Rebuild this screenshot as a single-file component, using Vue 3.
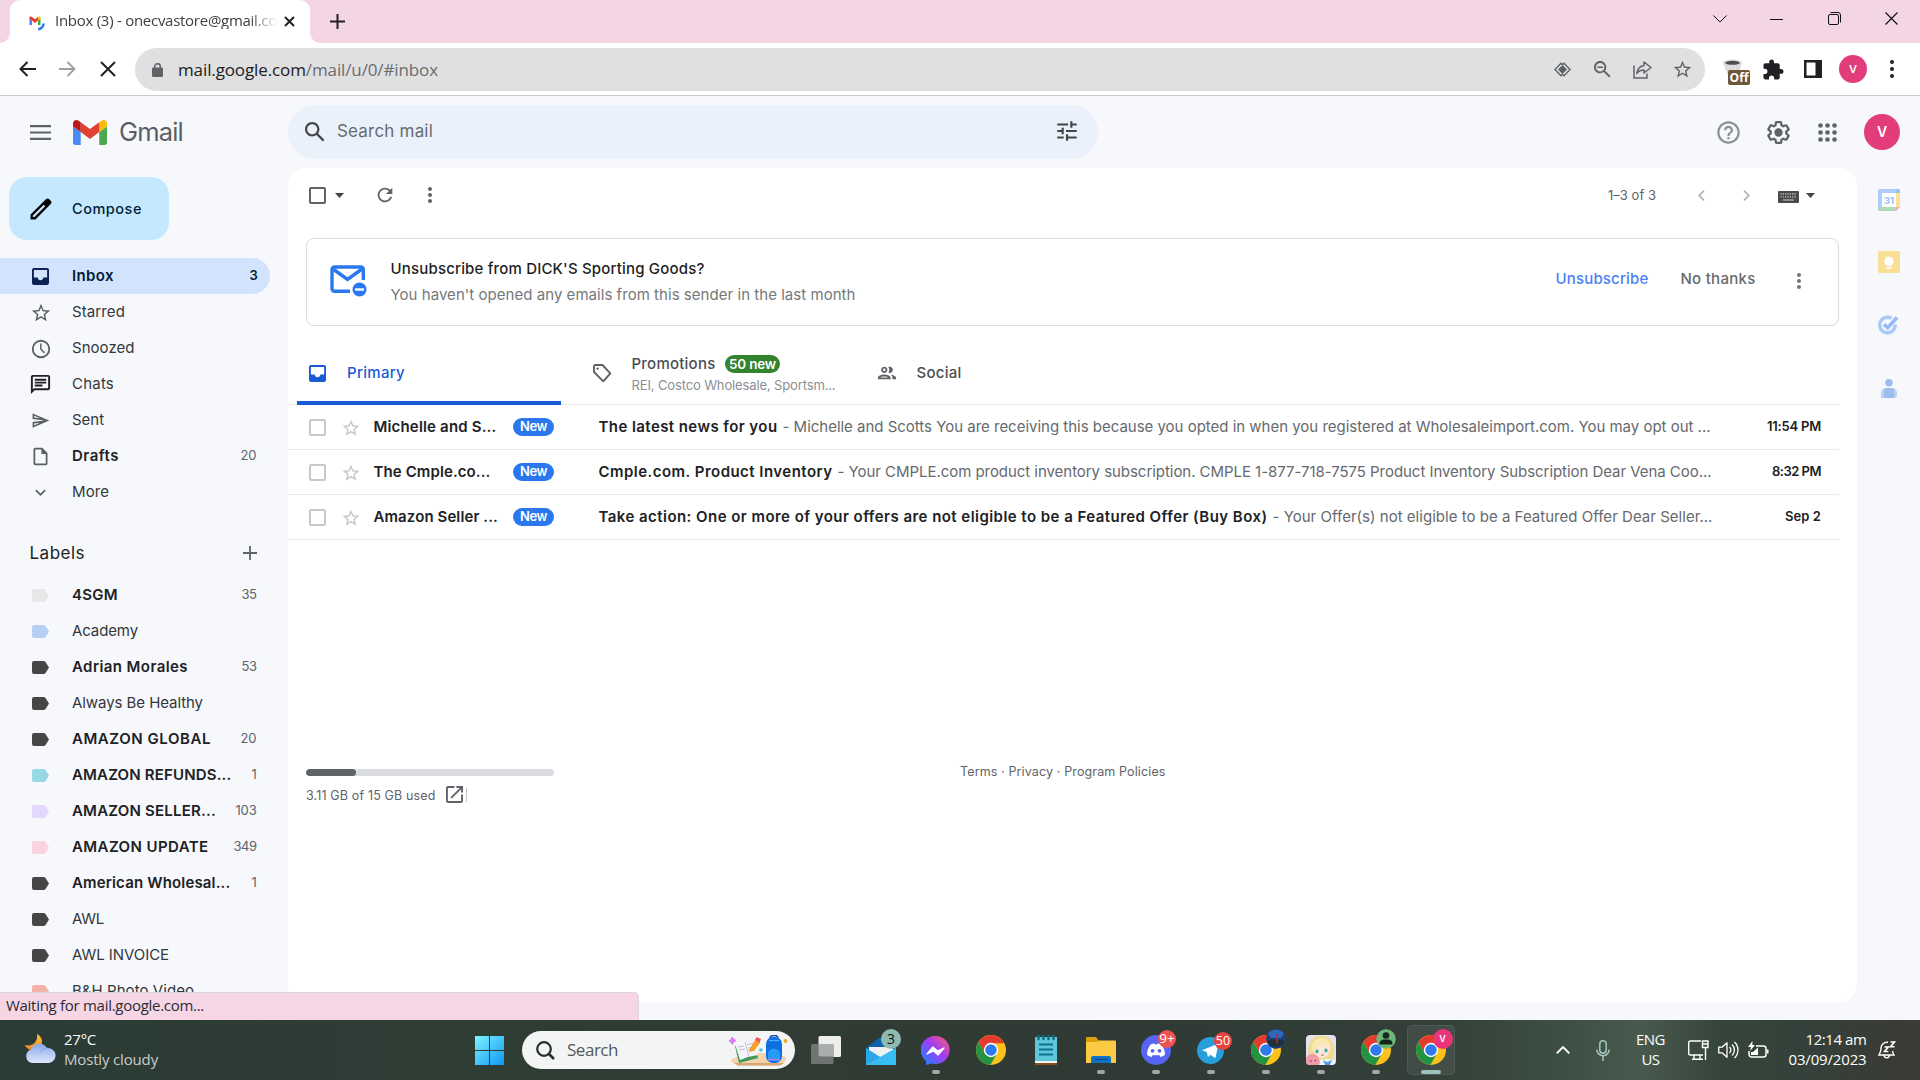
<script setup>
import { h } from 'vue'

/* Spreads the letters of an element so that its text takes up a given width. */
const vFit = {
  mounted(el, { value }) {
    if (!value) return
    const n = el.textContent.length
    let spacing = 0
    for (let i = 0; i < 3; i++) {
      spacing += (value - el.getBoundingClientRect().width) / n
      el.style.letterSpacing = spacing.toFixed(3) + 'px'
    }
  },
}

const paths = {
  inbox: 'M19 3H5c-1.1 0-2 .9-2 2v14c0 1.1.9 2 2 2h14c1.1 0 2-.9 2-2V5c0-1.1-.9-2-2-2zm0 10h-4c0 1.66-1.35 3-3 3s-3-1.34-3-3H5V5h14v8z',
  star: 'M22 9.24l-7.19-.62L12 2 9.19 8.63 2 9.24l5.46 4.73L5.82 21 12 17.27 18.18 21l-1.63-7.03L22 9.24zM12 15.4l-3.76 2.27 1-4.28-3.32-2.88 4.38-.38L12 6.1l1.71 4.04 4.38.38-3.32 2.88 1 4.28L12 15.4z',
  clock: 'M12 2a10 10 0 1 0 0 20 10 10 0 0 0 0-20zm0 18a8 8 0 1 1 0-16 8 8 0 0 1 0 16zM12.6 6H11v6.4l4.2 4.4 1.2-1.2-3.8-3.9z',
  chat: 'M4 4h16v12H5.17L4 17.17V4m0-2c-1.1 0-1.99.9-1.99 2L2 22l4-4h14c1.1 0 2-.9 2-2V4c0-1.1-.9-2-2-2H4zm2 10h8v2H6v-2zm0-3h12v2H6V9zm0-3h12v2H6V6z',
  send: 'M4 6.03l7.51 3.22-7.52-1 .01-2.22m7.5 8.72L4 17.97v-2.22l7.51-1M2.01 3L2 10l15 2-15 2 .01 7L23 12 2.01 3z',
  file: 'M14 2H6c-1.1 0-2 .9-2 2v16c0 1.1.89 2 2 2h12c1.1 0 2-.9 2-2V8l-6-6zM6 20V4h7v5h5v11H6z',
  more: 'M16.59 8.59L12 13.17 7.41 8.59 6 10l6 6 6-6z',
  search: 'M20.49,19l-5.73-5.73C15.53,12.2,16,10.91,16,9.5C16,5.91,13.09,3,9.5,3S3,5.91,3,9.5C3,13.09,5.91,16,9.5,16c1.41,0,2.7-0.47,3.77-1.24L19,20.49L20.49,19zM5,9.5C5,7.01,7.01,5,9.5,5S14,7.01,14,9.5S11.99,14,9.5,14S5,11.99,5,9.5z',
  zoomOut: 'M20.49,19l-5.73-5.73C15.53,12.2,16,10.91,16,9.5C16,5.91,13.09,3,9.5,3S3,5.91,3,9.5C3,13.09,5.91,16,9.5,16c1.41,0,2.7-0.47,3.77-1.24L19,20.49L20.49,19zM5,9.5C5,7.01,7.01,5,9.5,5S14,7.01,14,9.5S11.99,14,9.5,14S5,11.99,5,9.5zM6.5 8.7h6v1.6h-6z',
  tune: 'M3 17v2h6v-2H3zM3 5v2h10V5H3zm10 16v-2h8v-2h-8v-2h-2v6h2zM7 9v2H3v2h4v2h2V9H7zm14 4v-2H11v2h10zm-6-4h2V7h4V5h-4V3h-2v6z',
  help: 'M11 18h2v-2h-2v2zm1-16C6.48 2 2 6.48 2 12s4.48 10 10 10 10-4.48 10-10S17.52 2 12 2zm0 18c-4.41 0-8-3.59-8-8s3.59-8 8-8 8 3.59 8 8-3.59 8-8 8zm0-14c-2.21 0-4 1.79-4 4h2c0-1.1.9-2 2-2s2 .9 2 2c0 2-3 1.75-3 5h2c0-2.25 3-2.5 3-5 0-2.21-1.79-4-4-4z',
  gear: 'M13.85 22.25h-3.7c-.74 0-1.36-.54-1.45-1.27l-.27-1.89c-.27-.14-.53-.29-.79-.46l-1.8.72c-.7.26-1.47-.03-1.81-.65L2.2 15.53c-.35-.66-.2-1.44.36-1.88l1.53-1.19c-.01-.15-.02-.3-.02-.46 0-.15.01-.31.02-.46l-1.52-1.19c-.59-.45-.74-1.26-.37-1.88l1.85-3.19c.34-.62 1.11-.9 1.79-.63l1.81.73c.26-.17.52-.32.78-.46l.27-1.91c.09-.7.71-1.25 1.44-1.25h3.7c.74 0 1.36.54 1.45 1.27l.27 1.89c.27.14.53.29.79.46l1.8-.72c.71-.26 1.48.03 1.82.65l1.84 3.18c.36.66.2 1.44-.36 1.88l-1.52 1.19c.01.15.02.3.02.46s-.01.31-.02.46l1.52 1.19c.56.45.72 1.23.37 1.86l-1.86 3.22c-.34.62-1.11.9-1.8.63l-1.8-.72c-.26.17-.52.32-.78.46l-.27 1.91c-.1.68-.72 1.22-1.46 1.22zm-3.23-2h2.76l.37-2.55.53-.22c.44-.18.88-.44 1.34-.78l.45-.34 2.38.96 1.38-2.4-2.03-1.58.07-.56c.03-.26.06-.51.06-.78s-.03-.53-.06-.78l-.07-.56 2.03-1.58-1.39-2.4-2.39.96-.45-.35c-.42-.32-.87-.58-1.33-.77l-.52-.22-.37-2.55h-2.76l-.37 2.55-.53.21c-.44.19-.88.44-1.34.79l-.45.33-2.38-.95-1.39 2.39 2.03 1.58-.07.56a7 7 0 0 0-.06.79c0 .26.02.53.06.78l.07.56-2.03 1.58 1.38 2.4 2.39-.96.45.35c.43.33.86.58 1.33.77l.53.22.38 2.55zM12 8.3a3.7 3.7 0 1 1 0 7.4 3.7 3.7 0 0 1 0-7.4z',
  refresh: 'M17.65 6.35C16.2 4.9 14.21 4 12 4c-4.42 0-7.99 3.58-7.99 8s3.57 8 7.99 8c3.73 0 6.84-2.55 7.73-6h-2.08c-.82 2.33-3.04 4-5.65 4-3.31 0-6-2.69-6-6s2.69-6 6-6c1.66 0 3.14.69 4.22 1.78L13 11h7V4l-2.35 2.35z',
  people: 'M9 13.75c-2.34 0-7 1.17-7 3.5V19h14v-1.75c0-2.33-4.66-3.5-7-3.5zM4.34 17c.84-.58 2.87-1.25 4.66-1.25s3.82.67 4.66 1.25H4.34zM9 12c1.93 0 3.5-1.57 3.5-3.5S10.93 5 9 5 5.5 6.57 5.5 8.5 7.07 12 9 12zm0-5c.83 0 1.5.67 1.5 1.5S9.83 10 9 10s-1.5-.67-1.5-1.5S8.17 7 9 7zm7.04 6.81c1.16.84 1.96 1.96 1.96 3.44V19h4v-1.75c0-2.02-3.5-3.17-5.96-3.44zM15 12c1.93 0 3.5-1.57 3.5-3.5S16.93 5 15 5c-.54 0-1.04.13-1.5.35.63.89 1 1.98 1 3.15s-.37 2.26-1 3.15c.46.22.96.35 1.5.35z',
  puzzle: 'M20.5 11H19V7c0-1.1-.9-2-2-2h-4V3.5C13 2.12 11.88 1 10.5 1S8 2.12 8 3.5V5H4c-1.1 0-1.99.9-1.99 2v3.8H3.5c1.49 0 2.7 1.21 2.7 2.7s-1.21 2.7-2.7 2.7H2V20c0 1.1.9 2 2 2h3.8v-1.5c0-1.49 1.21-2.7 2.7-2.7 1.49 0 2.7 1.21 2.7 2.7V22H17c1.1 0 2-.9 2-2v-4h1.5c1.38 0 2.5-1.12 2.5-2.5S21.88 11 20.5 11z',
  open: 'M19 19H5V5h7V3H5c-1.11 0-2 .9-2 2v14c0 1.1.89 2 2 2h14c1.1 0 2-.9 2-2v-7h-2v7zM14 3v2h3.59l-9.83 9.83 1.41 1.41L19 6.41V10h2V3h-7z',
  pencil: 'M20.41 4.94l-1.35-1.35c-.78-.78-2.05-.78-2.83 0L3 16.82V21h4.18L20.41 7.77c.79-.78.79-2.05 0-2.83zM6.4 19H5v-1.4l9.3-9.3 1.4 1.4z',
  dots: 'M12 8c1.1 0 2-.9 2-2s-.9-2-2-2-2 .9-2 2 .9 2 2 2zm0 2c-1.1 0-2 .9-2 2s.9 2 2 2 2-.9 2-2-.9-2-2-2zm0 6c-1.1 0-2 .9-2 2s.9 2 2 2 2-.9 2-2-.9-2-2-2z',
  label: 'M0 2a2 2 0 0 1 2-2h9.500a2.500 2.500 0 0 1 2 1L17 6.500l-3.500 5.500a2.500 2.500 0 0 1-2 1H2a2 2 0 0 1-2-2z',
}

/* One-path icon: n = name, s = width and height, vb = view box. */
const Icon = (p) =>
  h('svg', { width: p.s, height: p.s, viewBox: p.vb || '0 0 24 24' }, [h('path', { d: paths[p.n], fill: 'currentColor' })])
Icon.props = ['n', 's', 'vb']

const Chrome = () =>
  h('svg', { width: 30, height: 30, viewBox: '0 0 48 48' }, [
    h('circle', { cx: 24, cy: 24, r: 24, fill: '#fcc21b' }),
    h('path', { fill: '#e33b2e', d: 'M24 24L14.470 29.500 3.820 11.050A24 24 0 0 1 45.300 13H24z' }),
    h('path', { fill: '#229342', d: 'M24 24l9.530 5.500L22.880 47.950A24 24 0 0 1 3.820 11.050L14.470 29.500z' }),
    h('circle', { cx: 24, cy: 24, r: 11.5, fill: '#fff' }),
    h('circle', { cx: 24, cy: 24, r: 9.2, fill: '#2f7bee' }),
  ])

const nav = [
  { icon: 'inbox', s: 17, vb: '3 3 18 18', t: 'Inbox', w: 42, c: '3', cw: 7, on: true, b: true },
  { icon: 'star', s: 22, t: 'Starred', w: 53 },
  { icon: 'clock', s: 22, t: 'Snoozed', w: 62.5 },
  { icon: 'chat', s: 23, t: 'Chats', w: 42, dark: true },
  { icon: 'send', s: 19, t: 'Sent', w: 32 },
  { icon: 'file', s: 21, t: 'Drafts', w: 47, c: '20', cw: 16, b: true },
  { icon: 'more', s: 21, t: 'More', w: 37 },
]

const labels = [
  { color: '#e7e7e7', t: '4SGM', w: 46, c: '35', cw: 15, b: true },
  { color: '#b6cff5', t: 'Academy', w: 66 },
  { color: '#464646', t: 'Adrian Morales', w: 116, c: '53', cw: 15, b: true },
  { color: '#464646', t: 'Always Be Healthy', w: 131 },
  { color: '#464646', t: 'AMAZON GLOBAL', w: 139, c: '20', cw: 16, b: true },
  { color: '#98d7e4', t: 'AMAZON REFUNDS...', w: 159.5, c: '1', cw: 5, b: true },
  { color: '#e3d7ff', t: 'AMAZON SELLER...', w: 144, c: '103', cw: 21, b: true },
  { color: '#fbd3e0', t: 'AMAZON UPDATE', w: 136.5, c: '349', cw: 23, b: true },
  { color: '#464646', t: 'American Wholesal...', w: 158.5, c: '1', cw: 5, b: true },
  { color: '#464646', t: 'AWL', w: 32 },
  { color: '#464646', t: 'AWL INVOICE', w: 97 },
  { color: '#f2b2a8', t: 'B&H Photo Video', w: 122 },
]

const mails = [
  {
    from: 'Michelle and S...', fw: 123, subject: 'The latest news for you', sw: 179,
    text: '- Michelle and Scotts You are receiving this because you opted in when you registered at Wholesaleimport.com. You may opt out ...', tw: 928,
    time: '11:54 PM', dw: 54,
  },
  {
    from: 'The Cmple.co...', fw: 117, subject: 'Cmple.com. Product Inventory', sw: 234,
    text: '- Your CMPLE.com product inventory subscription. CMPLE 1-877-718-7575 Product Inventory Subscription Dear Vena Coo...', tw: 874,
    time: '8:32 PM', dw: 49,
  },
  {
    from: 'Amazon Seller ...', fw: 124.5, subject: 'Take action: One or more of your offers are not eligible to be a Featured Offer (Buy Box)', sw: 669,
    text: '- Your Offer(s) not eligible to be a Featured Offer Dear Seller...', tw: 440,
    time: 'Sep 2', dw: 36,
  },
]
</script>

<template>
  <div class="screen">
    <!-- Browser tab strip -->
    <div class="strip">
      <div class="tab">
        <svg class="fav" width="16" height="15" viewBox="0 0 16 15">
          <path d="M0.500 2v7h2.500V4.500z" fill="#4285f4" />
          <path d="M9 4.500V9h2.500V2z" fill="#34a853" />
          <path d="M0.500 3V1.500C.5.300 2 .1 3 1l3 2.300L9 1l0 3.500L6 7 3 4.600z" fill="#e33b2e" />
          <path d="M9 1c1-.9 2.500-.5 2.500.7V3L9 4.700z" fill="#fbbc04" />
          <path d="M14.600 7.500c-.3 3.400-2.200 5.200-5.400 5.900" stroke="#2f7bee" stroke-width="2.600" fill="none" />
        </svg>
        <div class="title"><span class="t" v-fit="222">Inbox (3) - onecvastore@gmail.co</span></div>
        <svg width="11" height="11" viewBox="0 0 11 11" stroke="#202124" stroke-width="2"><path d="M1 1l9 9M10 1l-9 9" /></svg>
      </div>
      <svg class="plus" width="15" height="15" viewBox="0 0 15 15" stroke="#202124" stroke-width="2"><path d="M7.500 0v15M0 7.500h15" /></svg>
      <div class="wins">
        <svg width="14" height="14" viewBox="0 0 14 14" fill="none" stroke="#111"><path d="M.5 3.500L7 10l6.500-6.500" /></svg>
        <svg width="13" height="14" viewBox="0 0 13 14" stroke="#111"><path d="M0 7.500h13" /></svg>
        <svg width="13" height="13" viewBox="0 0 13 13" fill="none" stroke="#111"><rect x=".5" y="2.500" width="10" height="10" rx="1.500" /><path d="M2.500 .5h7.500a2.500 2.500 0 0 1 2.500 2.500v7.500" /></svg>
        <svg width="13" height="13" viewBox="0 0 13 13" stroke="#111" stroke-width="1.200"><path d="M.5.5l12 12M12.500.5l-12 12" /></svg>
      </div>
    </div>

    <!-- Browser toolbar -->
    <div class="bar">
      <svg width="17" height="16" viewBox="0 0 17 16" fill="none" stroke="#202124" stroke-width="2"><path d="M17 8H2M8.500 1l-7 7 7 7" /></svg>
      <svg width="17" height="16" viewBox="0 0 17 16" fill="none" stroke="#9fa0a2" stroke-width="1.800"><path d="M0 8h15M8.500 1l7 7-7 7" /></svg>
      <svg width="16" height="16" viewBox="0 0 16 16" stroke="#202124" stroke-width="2"><path d="M1 1l14 14M15 1L1 15" /></svg>
      <div class="omni">
        <svg width="11" height="14" viewBox="0 0 11 14"><rect y="4.500" width="11" height="9.500" rx="1.200" fill="#5f6368" /><path d="M2.700 5.500V3.500a2.800 2.800 0 0 1 5.600 0v2" fill="none" stroke="#5f6368" stroke-width="1.500" /></svg>
        <span class="t url" v-fit="260"><b>mail.google.com</b>/mail/u/0/#inbox</span>
        <div class="omni-icons">
          <svg width="17" height="15" viewBox="0 0 17 15"><path d="M8.500 3L13 7.500 8.500 12 4 7.500z" fill="#5f6368" /><path d="M7 1.200L.9 7.500 7 13.800l1.500-1.500 1.500 1.500 6.100-6.300L10 1.200 8.500 2.700z" fill="none" stroke="#5f6368" stroke-width="1.400" /></svg>
          <Icon n="zoomOut" s="17" vb="3 3 18 18" />
          <svg width="19" height="18" viewBox="0 0 19 18" fill="none" stroke="#5f6368" stroke-width="1.500"><path d="M1 4.500V17h13v-4.500" /><path d="M11 1l7 5.500-7 5.500V9C8 9 5.500 10 3.800 12.500 4.500 8.500 7 5 11 4.500z" stroke-linejoin="round" /></svg>
          <Icon n="star" s="21" />
        </div>
      </div>
      <div class="ext">
        <svg width="22" height="20" viewBox="0 0 22 20"><path d="M1 3h19l-3.500 12H5z" fill="#dcdcdc" /><ellipse cx="10.500" cy="4" rx="10" ry="3.600" fill="#dedede" /><ellipse cx="10.500" cy="3.800" rx="7.500" ry="2" fill="#4d4d4d" /></svg>
        <span class="off">Off</span>
      </div>
      <Icon class="puz" n="puzzle" s="21" vb="1.500 .5 22 22" />
      <svg class="side" width="18" height="18" viewBox="0 0 18 18"><path d="M0 0h18v18H0z" fill="#202124" /><path d="M2.500 2.500h9v13h-9z" fill="#fff" /></svg>
      <div class="av small">V</div>
      <svg class="kebab" width="4" height="18" viewBox="0 0 4 18" fill="#202124"><circle cx="2" cy="2" r="2" /><circle cx="2" cy="9" r="2" /><circle cx="2" cy="16" r="2" /></svg>
    </div>

    <div class="gmail">
      <header class="head">
        <div class="brand">
          <svg width="21" height="15" viewBox="0 0 21 15" stroke="#5f6368" stroke-width="2.200"><path d="M0 1.200h21M0 7.500h21M0 13.800h21" /></svg>
          <svg class="logo" width="34" height="25" viewBox="52 42 88 66" preserveAspectRatio="none">
            <path fill="#4a8af5" d="M58 108h14V74L52 59v43c0 3.320 2.690 6 6 6" /><path fill="#4ba850" d="M120 108h14c3.320 0 6-2.690 6-6V59l-20 15" />
            <path fill="#f9bc08" d="M120 48v26l20-15v-8c0-7.420-8.470-11.650-14.400-7.200" /><path fill="#e14133" d="M72 74V48l24 18 24-18v26L96 92" />
            <path fill="#ba1a1a" d="M52 51v8l20 15V48l-5.600-4.200c-5.940-4.450-14.400-.22-14.400 7.200" />
          </svg>
          <span class="t word" v-fit="64">Gmail</span>
        </div>
        <div class="find">
          <Icon n="search" s="20" vb="3 3 18 18" />
          <span class="t" v-fit="96">Search mail</span>
          <Icon class="tune" n="tune" s="26" />
        </div>
        <div class="tools">
          <Icon class="pale" n="help" s="27" />
          <Icon n="gear" s="27" />
          <svg width="19" height="19" viewBox="0 0 19 19" fill="#5f6368">
            <template v-for="y in 3" :key="y"><circle v-for="x in 3" :key="x" :cx="x * 7 - 4.500" :cy="y * 7 - 4.500" r="2.300" /></template>
          </svg>
          <div class="av">V</div>
        </div>
      </header>

      <div class="body">
        <nav class="side-nav">
          <div class="compose"><Icon n="pencil" s="22" vb="2.500 2.500 19 19" /><span class="t" v-fit="70">Compose</span></div>
          <div v-for="r in nav" :key="r.t" class="nav" :class="{ on: r.on, bold: r.b, dark: r.dark }">
            <span class="ico"><Icon :n="r.icon" :s="r.s" :vb="r.vb" /></span>
            <span class="t" v-fit="r.w">{{ r.t }}</span>
            <span v-if="r.c" class="t count" v-fit="r.cw">{{ r.c }}</span>
          </div>
          <div class="lab-head">
            <span class="t" v-fit="55.500">Labels</span>
            <svg width="14" height="14" viewBox="0 0 14 14" stroke="#5f6368" stroke-width="1.800"><path d="M7 0v14M0 7h14" /></svg>
          </div>
          <div v-for="r in labels" :key="r.t" class="nav" :class="{ bold: r.b }">
            <span class="ico"><svg class="lab" width="17" height="13" viewBox="0 0 17 13" :fill="r.color"><path :d="paths.label" /></svg></span>
            <span class="t" v-fit="r.w">{{ r.t }}</span>
            <span v-if="r.c" class="t count" v-fit="r.cw">{{ r.c }}</span>
          </div>
        </nav>

        <main class="card">
          <div class="acts">
            <i class="box strong"></i>
            <svg class="car" width="9" height="5" viewBox="0 0 9 5"><path d="M0 0h9L4.500 5z" fill="#444" /></svg>
            <Icon class="ref" n="refresh" s="22" />
            <Icon class="kb" n="dots" s="18" vb="3 3 18 18" />
            <span class="t range" v-fit="48">1–3 of 3</span>
            <svg width="7" height="11" viewBox="0 0 7 11" fill="none" stroke="#b5b5b5" stroke-width="1.800"><path d="M6 .7L1.200 5.500 6 10.300" /></svg>
            <svg class="nx" width="7" height="11" viewBox="0 0 7 11" fill="none" stroke="#b5b5b5" stroke-width="1.800"><path d="M1 .7l4.800 4.800L1 10.300" /></svg>
            <svg class="keys" width="21" height="12" viewBox="0 0 21 12"><rect width="21" height="12" rx="1" fill="#4a4a4a" /><path d="M2.500 3h16M2.500 5.800h16" stroke="#bbb" stroke-width="1.300" stroke-dasharray="1.300 1" /><path d="M5 9h11" stroke="#bbb" stroke-width="1.200" /></svg>
            <svg width="9" height="5" viewBox="0 0 9 5"><path d="M0 0h9L4.500 5z" fill="#444" /></svg>
          </div>

          <section class="banner">
            <svg width="38" height="33" viewBox="0 0 38 33" fill="none" stroke="#2b78ee" stroke-width="3.400">
              <path d="M20 26.300H4.500a2.500 2.500 0 0 1-2.500-2.500V4.500A2.500 2.500 0 0 1 4.500 2h26.300a2.500 2.500 0 0 1 2.500 2.500V15" /><path d="M3 4l14.500 10.500L32 4" /><circle cx="29.500" cy="24.500" r="7" fill="#2b78ee" stroke="none" /><path d="M25 24.500h9" stroke="#fff" stroke-width="2.400" />
            </svg>
            <div class="btext">
              <span class="t q" v-fit="314">Unsubscribe from DICK'S Sporting Goods?</span>
              <span class="t s" v-fit="465">You haven't opened any emails from this sender in the last month</span>
            </div>
            <span class="t link" v-fit="93">Unsubscribe</span>
            <span class="t no" v-fit="75">No thanks</span>
            <Icon class="bk" n="dots" s="18" vb="3 3 18 18" />
          </section>

          <div class="tabs">
            <div class="mt cur"><Icon n="inbox" s="17" vb="3 3 18 18" /><span class="t" v-fit="58">Primary</span></div>
            <div class="mt">
              <svg width="20" height="20" viewBox="0 0 20 20" fill="none" stroke="#5f6368" stroke-width="1.900"><path d="M2 3.300V9l9.300 9.300 7-8L10.500 2H3.300A1.300 1.300 0 0 0 2 3.300z" stroke-linejoin="round" /><circle cx="5.600" cy="5.600" r="1.200" fill="#5f6368" stroke="none" /></svg>
              <div class="promo">
                <div class="pl"><span class="t" v-fit="84">Promotions</span><span class="chip green"><span class="t" v-fit="47">50 new</span></span></div>
                <span class="t sub" v-fit="204">REI, Costco Wholesale, Sportsm...</span>
              </div>
            </div>
            <div class="mt"><Icon n="people" s="20" vb="1 1.500 22 21" /><span class="t" v-fit="45">Social</span></div>
          </div>

          <div v-for="m in mails" :key="m.from" class="mail">
            <i class="box"></i>
            <Icon class="st" n="star" s="20" />
            <div class="from"><span class="t" v-fit="m.fw">{{ m.from }}</span></div>
            <span class="chip blue"><span class="t" v-fit="27">New</span></span>
            <span class="t subj" v-fit="m.sw">{{ m.subject }}</span>
            <span class="t snip" v-fit="m.tw">{{ m.text }}</span>
            <span class="t date" v-fit="m.dw">{{ m.time }}</span>
          </div>

          <footer class="foot">
            <div class="store">
              <div class="meter"><i></i></div>
              <div class="used"><span class="t" v-fit="129.500">3.11 GB of 15 GB used</span><Icon n="open" s="17" vb="3 3 18 18" /><i></i></div>
            </div>
            <span class="t" v-fit="205.500">Terms · Privacy · Program Policies</span>
          </footer>
        </main>

        <aside class="panel">
          <svg width="22" height="22" viewBox="0 0 22 22"><path d="M0 1.500A1.500 1.500 0 0 1 1.500 0H18v4H4v18H0z" fill="#b0cdf9" /><path d="M18 0h2.500A1.500 1.500 0 0 1 22 1.500V4h-4z" fill="#9dbdf5" /><path d="M18 4h4v14h-4z" fill="#fbe09a" /><path d="M4 4h14v14H4z" fill="#fff" /><path d="M0 18h18v4H1.500A1.500 1.500 0 0 1 0 20.500z" fill="#afd8b9" /><path d="M18 18h4l-4 4z" fill="#f4a9a2" /><text x="11" y="14.500" text-anchor="middle" class="cal">31</text></svg>
          <svg width="22" height="22" viewBox="0 0 22 22"><rect width="22" height="22" rx="1.500" fill="#f9df95" /><path d="M11 5.500a4.700 4.700 0 0 1 2.500 8.600v.9h-5v-.9A4.700 4.700 0 0 1 11 5.500zM8.500 16h5v1.800h-5z" fill="#fff" /></svg>
          <svg width="21" height="20" viewBox="0 0 21 20" fill="none"><path d="M17.300 9.500A7.800 7.800 0 1 1 13.500 3.300" stroke="#a9c9fb" stroke-width="3.400" /><path d="M6 9.300l3.700 3.500L19 2.500" stroke="#94b9f5" stroke-width="3.600" /></svg>
          <svg width="16" height="19" viewBox="0 0 16 19"><circle cx="8" cy="3.800" r="3.800" fill="#9fbcef" /><path d="M0 19v-5a5 5 0 0 1 5-5h6a5 5 0 0 1 5 5v2a3 3 0 0 1-3 3z" fill="#b9d0f8" /><path d="M3 19v-7a3 3 0 0 1 3-3h4a3 3 0 0 1 3 3v7z" fill="#9fbcef" /></svg>
        </aside>
      </div>
      <div class="status"><span class="t" v-fit="198">Waiting for mail.google.com...</span></div>
    </div>

    <!-- Windows taskbar -->
    <div class="task">
      <div class="weather">
        <svg width="31" height="30" viewBox="0 0 31 30">
          <defs><linearGradient id="cl" x2="0" y2="1"><stop stop-color="#88a8ea" /><stop offset="1" stop-color="#dfe8fc" /></linearGradient><linearGradient id="mo" x2="0" y2="1"><stop stop-color="#fbc53a" /><stop offset="1" stop-color="#f08a24" /></linearGradient></defs>
          <path d="M12 0c7 3 7 14-2 16C5 17 1 14 0 11c8 2 13-3 12-11z" fill="url(#mo)" />
          <path d="M7 29a7 7 0 0 1-1-13.500A9 9 0 0 1 22 14a7.500 7.500 0 0 1 2 15z" fill="url(#cl)" /><path d="M15 19c2-4 6-5.500 9-4.800" stroke="#7897dd" fill="none" opacity=".6" />
        </svg>
        <div><span class="t" v-fit="32">27°C</span><span class="t dim" v-fit="94">Mostly cloudy</span></div>
      </div>
      <svg class="win" width="29" height="29" viewBox="0 0 29 29"><defs><linearGradient id="wi" x2="1" y2="1"><stop stop-color="#7df3ff" /><stop offset="1" stop-color="#0f96f5" /></linearGradient></defs><path d="M0 0h14v14H0zM15 0h14v14H15zM0 15h14v14H0zM15 15h14v14H15z" fill="url(#wi)" /></svg>
      <div class="tsearch">
        <svg width="19" height="19" viewBox="0 0 19 19" fill="none" stroke="#27302c" stroke-width="2.200"><circle cx="8" cy="8" r="6.800" /><path d="M12.500 12.500L18 18" stroke-width="2.600" /></svg>
        <span class="t" v-fit="51">Search</span>
        <svg class="art" width="60" height="31" viewBox="0 0 60 31">
          <path d="M1 26c9-9 42-11 57-3l-3 5-4 2.500H9z" fill="#f3d3ae" /><path d="M5 28h50l-4 2.500H9z" fill="#d7a877" />
          <path d="M6 11l19-5 4 17-19 5z" fill="#3f9b54" /><path d="M6 9l10-2 9-2 4 15-10 2-8 3z" fill="#f6f4fb" /><path d="M16 7l4 15M9 12l6-1M10 15l6-1M18 9.500l6-1M19 13l6-1" stroke="#bbb4cc" stroke-width=".9" />
          <path d="M20 15l6-10 5 3-6 8-5 1z" fill="#f9a12c" /><path d="M26 5l1.500-3 4.500 2-1.500 4z" fill="#ef5a50" />
          <rect x="37" y="2" width="16" height="26" rx="7" fill="#0f6fe0" /><path d="M41 3c0-3.500 8-3.500 8 0" fill="none" stroke="#174ea6" stroke-width="1.500" /><path d="M39 19a6 5.500 0 0 1 12 0v7H39z" fill="#249bf5" /><path d="M39 24.500h11" stroke="#b97bf0" stroke-width="1.500" /><path d="M40 5.500h10" stroke="#4bb2ff" stroke-width="1.200" />
          <path d="M3 2l1.300 2L7 5.500 4.500 7 3.300 9.500 2 7 0 6l2-1.500z" fill="#dd7bf5" stroke="#dd7bf5" /><circle cx="32" cy="15" r="1.800" fill="#4cc6d8" /><circle cx="56.500" cy="6" r="1.900" fill="#f5a623" />
        </svg>
      </div>
      <div class="apps">
        <div class="app"><svg width="30" height="28" viewBox="0 0 30 28"><rect x="7.500" width="22.500" height="21" rx="1.500" fill="#eeeeec" /><rect y="8" width="22.500" height="20" rx="1.500" fill="#6f7572" /><path d="M7.500 8h15v12.500h-13a2 2 0 0 1-2-2z" fill="#aaadab" /></svg></div>
        <div class="app">
          <svg width="30" height="29" viewBox="0 0 30 29"><path d="M0 12L13 2h4l13 10v5H0z" fill="#0d62ac" /><path d="M3 11h24v9l-12 4L3 19z" fill="#eef0f2" /><path d="M0 12l15 9.500L30 12v17H0z" fill="#2ba6e8" /><path d="M0 29l30-17v17z" fill="#38bdf3" /></svg>
          <span class="bd b3">3</span>
        </div>
        <div class="app run">
          <svg width="29" height="29" viewBox="0 0 29 29"><defs><linearGradient id="ms" x1="1" y1="0" x2="0" y2="1"><stop stop-color="#ff5f6b" /><stop offset=".45" stop-color="#a33bf5" /><stop offset="1" stop-color="#0a8cff" /></linearGradient></defs><path d="M14.500 0a14 14 0 0 1 0 28c-1.500 0-3-.2-4.300-.6L5 29v-4A14 14 0 0 1 14.500 0z" fill="url(#ms)" /><path d="M6 18l6-7 4.500 4 6.500-3-6 7-4.500-4z" fill="#fff" stroke="#fff" stroke-width="1.300" stroke-linejoin="round" /></svg>
        </div>
        <div class="app"><Chrome /></div>
        <div class="app"><svg width="22" height="30" viewBox="0 0 22 30"><path d="M0 26h22v4H0z" fill="#8a4d1e" /><path d="M0 2h22v24H0z" fill="#5dc8dc" /><path d="M0 26h22v2H0z" fill="#f1f4f4" /><path d="M3.500 0v4M8.500 0v4M13.500 0v4M18.500 0v4" stroke="#126b84" stroke-width="2.400" stroke-linecap="round" /><path d="M4 9.500h14M4 14.500h14M4 19.500h14" stroke="#10708c" stroke-width="1.800" /></svg></div>
        <div class="app run"><svg width="30" height="26" viewBox="0 0 30 26"><path d="M0 1a1 1 0 0 1 1-1h9l3 4v6H0z" fill="#dc9e0b" /><path d="M0 5h11l2-1.500h16a1 1 0 0 1 1 1V26H0z" fill="#fccb43" /><path d="M5 26v-5a2 2 0 0 1 2-2h16a2 2 0 0 1 2 2v5z" fill="#1173c6" /><path d="M8.500 22.500h13" stroke="#0b4b8a" stroke-width="1.400" /></svg></div>
        <div class="app run">
          <svg width="30" height="30" viewBox="0 0 30 30"><circle cx="15" cy="15" r="15" fill="#5765f2" /><path d="M9.500 9.500c1.500-.7 2.800-1 4-1l.5 1h2l.5-1c1.200 0 2.500.3 4 1 2.500 3.500 3.700 7 3.300 10.500-1.500 1.200-3 1.800-4.300 2l-1-1.800h-7l-1 1.800c-1.300-.2-2.800-.8-4.300-2-.4-3.500.8-7 3.300-10.500z" fill="#fff" /><circle cx="11.500" cy="15.800" r="1.900" fill="#5765f2" /><circle cx="18.500" cy="15.800" r="1.900" fill="#5765f2" /></svg>
          <span class="bd red">9+</span>
        </div>
        <div class="app run">
          <svg width="27" height="27" viewBox="0 0 27 27"><circle cx="13.500" cy="13.500" r="13.500" fill="#269fdc" /><path d="M5.500 13L20 7.300c.9-.3 1.300.3 1.100 1.200L18.700 20c-.2.900-.8 1-1.500.6l-3.700-2.800-1.900 1.800c-.5.400-.8.200-.9-.4l-.9-4.300-4.300-1.300c-.4-.1-.4-.4 0-.6z" fill="#fff" /></svg>
          <span class="bd red fifty">50</span>
        </div>
        <div class="app run"><Chrome /><svg class="bd" width="20" height="20" viewBox="0 0 20 20"><circle cx="10" cy="10" r="10" fill="#1d3f73" /><path d="M2 4.500A10 10 0 0 1 18 4.500L15 9H5z" fill="#2c68bd" /><path d="M1 12c5-2 13-1 18 0a10 10 0 0 1-18 0z" fill="#203038" /><path d="M11 5v9" stroke="#b3302f" stroke-width="1.500" /></svg></div>
        <div class="app run">
          <svg width="30" height="30" viewBox="0 0 30 30">
            <rect width="30" height="30" rx="4" fill="#e4e1ee" />
            <path d="M3 20C0 8 7 1 15 1s14 5 13 17l-2 8H5z" fill="#f0da8c" />
            <path d="M7 14c0-6 5-8 9-8s8 3 8 8c0 5-4 9-8 9s-9-4-9-9z" fill="#fce6da" />
            <path d="M5 15C6 7 10 3 16 3c5 0 9 4 9 11l-3-5-2 3-3-6-4 6-3 1-2 3z" fill="#f7eaae" />
            <ellipse cx="11" cy="16.500" rx="1.600" ry="2" fill="#3fa9a4" /><ellipse cx="20" cy="15.500" rx="1.600" ry="2" fill="#3fa9a4" />
            <path d="M15 20q1.500 1 3-.3" stroke="#c2605c" fill="none" />
            <path d="M0 25a6.500 5.500 0 0 1 13-1c1 2 1 4 0 6H4a4 4 0 0 1-4-4z" fill="#f09aa9" /><circle cx="5" cy="26" r=".8" fill="#7e3040" /><circle cx="9.500" cy="25.500" r=".8" fill="#7e3040" />
            <path d="M14 25l7-1 8 1v1a4 4 0 0 1-4 4H14z" fill="#f1f4fb" /><path d="M17 25l4 2 5-2-2 5h-5z" fill="#5b9be0" />
          </svg>
        </div>
        <div class="app run"><Chrome /><svg class="bd" width="20" height="20" viewBox="0 0 20 20"><circle cx="10" cy="10" r="10" fill="#6fb578" /><circle cx="10" cy="6.500" r="3.300" fill="#10281a" /><path d="M3.500 15.500c0-5 3-5 6.500-5s6.500 0 6.500 5z" fill="#10281a" /></svg></div>
        <div class="app run act"><Chrome /><span class="bd pink">V</span></div>
      </div>
      <div class="tray">
        <svg class="up" width="14" height="8" viewBox="0 0 14 8" fill="none" stroke="#fff" stroke-width="1.900"><path d="M.7 7.300L7 1l6.300 6.300" /></svg>
        <svg class="mic" width="14" height="21" viewBox="0 0 14 21" fill="none" stroke="#a3c8c0" stroke-width="1.500"><rect x="3.800" y=".8" width="6.400" height="12.500" rx="3.200" /><path d="M.8 9.500a6.200 6.200 0 0 0 12.400 0M7 16v5" /></svg>
        <div class="lang"><span class="t" v-fit="29">ENG</span><span class="t" v-fit="18">US</span></div>
        <svg class="net" width="21" height="20" viewBox="0 0 21 20" fill="none" stroke="#fff" stroke-width="1.400"><path d="M13 1H2.200A1.500 1.500 0 0 0 .7 2.500v11A1.500 1.500 0 0 0 2.200 15H15M6 15v4M12 15v4M4 19.200h11" /><path d="M14.500 1h5.500v6.500h-5.500zM14.500 4h5.500M17.500 7.500V20" /></svg>
        <svg class="vol" width="21" height="18" viewBox="0 0 21 18" fill="none" stroke="#fff" stroke-width="1.300"><path d="M.7 6.200v5.600h3.300l5 4.500V1.700l-5 4.500z" stroke-linejoin="round" /><path d="M11.500 6a4 4 0 0 1 0 6M14 3.500a7.500 7.500 0 0 1 0 11M16.500 1a11 11 0 0 1 0 16" /></svg>
        <svg class="bat" width="21" height="17" viewBox="0 0 21 17"><path d="M8 5h7.500A2.500 2.500 0 0 1 18 7.500v6a2.500 2.500 0 0 1-2.500 2.500h-12A2.500 2.500 0 0 1 1 13.500V10" fill="none" stroke="#fff" stroke-width="1.500" /><path d="M3 14v-3h2L10 6.500V14zM4.500 0L0 6h3L2 10l5-6H4.300zM19 8.500h1.500v4H19z" fill="#fff" /></svg>
        <div class="clk"><span class="t" v-fit="61">12:14 am</span><span class="t" v-fit="78">03/09/2023</span></div>
        <svg width="18" height="18" viewBox="0 0 18 18" fill="none" stroke="#fff" stroke-width="1.400"><path d="M10 1.300C5.500.8 3 4 3 7.500c0 3-1 4.500-2 6.500h15c-.8-1.500-1.300-2.500-1.500-4M6 14.500c.5 3 5 3 5.500 0" /><path d="M6.500 6h3.800l-3.800 4.500h3.800M12.500 1h4l-4 4.800h4" stroke-width="1.600" /></svg>
      </div>
    </div>
  </div>
</template>

<style>
body { margin: 0; overflow: hidden; }
</style>

<style scoped>
.screen { width: 1920px; height: 1080px; display: flex; flex-direction: column; overflow: hidden; font-family: Inter, Roboto, sans-serif; font-size: 15px; color: #202124; }
.screen svg { display: block; flex: none; }
.t { display: inline-block; flex: none; white-space: pre; line-height: 1.2; }

.strip { height: 43px; flex: none; background: #f4d5e4; display: flex; align-items: center; padding-left: 10px; font-family: "Open Sans", sans-serif; }
.tab { position: relative; width: 300px; height: 43px; box-sizing: border-box; background: #fff; border-radius: 10px 10px 0 0; display: flex; align-items: center; padding-left: 19px; }
.tab::before, .tab::after { content: ""; position: absolute; bottom: 0; width: 10px; height: 10px; }
.tab::before { left: -10px; background: radial-gradient(circle at 0 0, transparent 9.500px, #fff 10px); }
.tab::after { right: -10px; background: radial-gradient(circle at 100% 0, transparent 9.500px, #fff 10px); }
.fav { margin-top: 3px; }
.title { width: 222px; margin: -3px 7px 0 10px; font-size: 15px; color: #3c4043; mask-image: linear-gradient(90deg, #000 195px, transparent 222px); display: flex; }
.plus { margin-left: 20px; }
.wins { margin: -6px 22px 0 auto; display: flex; align-items: center; gap: 44px; }
.wins svg:nth-child(2) { margin: 0 1px 0 -1px; }

.bar { height: 53px; box-sizing: border-box; flex: none; border-bottom: 1px solid #c9cacd; background: #fff; display: flex; align-items: center; padding: 0 26px 0 19px; }
.bar > svg:nth-child(2) { margin: 0 24px 0 23px; }
.omni { width: 1570px; height: 43px; margin: 1px 0 0 19px; box-sizing: border-box; border-radius: 22px; background: #e0e0e0; display: flex; align-items: center; padding: 0 12px 0 17px; color: #5f6368; flex: none; }
.url { margin-left: 15px; font: 17px "Open Sans", sans-serif; color: #696c70; }
.url b { font-weight: 400; color: #202124; }
.omni-icons { margin-left: auto; display: flex; align-items: center; gap: 21px; }
.omni-icons svg:nth-child(2) { margin-left: 2px; }
.omni-icons svg:nth-child(3) { margin: 0 -1px 0 1px; }
.ext { position: relative; width: 28px; margin-left: 17px; flex: none; }
.off { position: absolute; left: 6px; top: 11px; width: 22px; height: 15px; border-radius: 2px; background: #6e5638; color: #fff; font: 700 12px/16px "Open Sans", sans-serif; text-align: center; }
.puz { margin-left: 13px; color: #202124; }
.side { margin-left: 19.500px; margin-right: 17.500px; }
.av { width: 36px; height: 36px; border-radius: 50%; background: #e23c7a; color: #fff; font: 600 14px/36px Inter, sans-serif; text-align: center; flex: none; }
.small { width: 28px; height: 28px; line-height: 28px; font-size: 11px; font-weight: 600; }
.kebab { margin-left: auto; }

.gmail { position: relative; height: 924px; flex: none; background: #f6f8fc; display: flex; flex-direction: column; overflow: hidden; }
.head { height: 72px; flex: none; display: flex; align-items: center; padding-right: 20px; }
.brand { width: 288px; box-sizing: border-box; padding: 1px 0 0 30px; display: flex; align-items: center; flex: none; }
.logo { margin: 0 12px 0 22px; }
.word { font-family: Inter, sans-serif; font-size: 25.500px; color: #5b5e62; }
.find { width: 810px; height: 54px; box-sizing: border-box; border-radius: 27px; background: #eaf1fb; display: flex; align-items: center; padding: 0 18px 0 17px; color: #444746; font-size: 17px; }
.find .t { margin: -2px 0 0 12px; color: #686b6e; }
.tune { margin-left: auto; margin-top: -2px; }
.tools { margin-left: auto; display: flex; align-items: center; color: #5f6368; }
.tools svg { margin-right: 23px; }
.tools svg:nth-child(3) { margin: 0 27px 0 3px; }
.pale { color: #8e9194; }

.body { flex: 1; display: flex; min-height: 0; }
.side-nav { width: 288px; flex: none; padding-top: 9px; box-sizing: border-box; }
.compose { width: 160px; height: 63px; box-sizing: border-box; margin: 0 0 18px 9px; padding-left: 21px; border-radius: 18px; background: #c5e8ff; display: flex; align-items: center; gap: 20px; color: #001d35; font-weight: 500; font-size: 14.500px; }
.compose svg { color: #000; }
.nav { width: 270px; height: 36px; box-sizing: border-box; padding: 0 13.500px 0 25.500px; display: flex; align-items: center; color: #34373b; font-size: 15px; }
.nav .ico { width: 30px; margin-right: 16.500px; display: flex; justify-content: center; color: #5c5f62; flex: none; padding-top: 1px; }
.nav .lab { margin-left: -.5px; }
.nav.bold { font-weight: 600; color: #202124; }
.nav.dark .ico { color: #202124; }
.nav .count { margin-left: auto; font-size: 13px; font-weight: 400; color: #5f6368; }
.nav.on { border-radius: 0 18px 18px 0; background: #d3e3fd; color: #001d35; }
.nav.on .ico { color: #0b2455; }
.nav.on .count { font-weight: 600; color: #001d35; }
.lab-head { height: 66.500px; box-sizing: border-box; padding: 19.500px 13px 0 29.500px; width: 270px; display: flex; align-items: center; justify-content: space-between; font-size: 17px; }

.card { width: 1569px; height: 834px; flex: none; background: #fff; border-radius: 18px; display: flex; flex-direction: column; }
.acts { height: 54px; display: flex; align-items: center; padding: 0 42px 0 21px; color: #5f6368; flex: none; }
.box { width: 17px; height: 17px; box-sizing: border-box; border: 2px solid #c7c8ca; border-radius: 2px; flex: none; }
.box.strong { border-color: #5f6368; }
.car { margin-left: 9px; }
.ref { margin-left: 30px; }
.kb { margin-left: 25px; }
.acts .range { margin: 1px 42px 0 auto; font-size: 13px; }
.acts .nx { margin: 0 28px 0 38px; }
.keys { margin: 3px 7px 0 0; }
.banner { height: 88px; box-sizing: border-box; flex: none; margin: 16px 18px 0; border: 1px solid #dadce0; border-radius: 8px; display: flex; align-items: center; padding: 0 30.500px 0 23px; }
.banner > svg:first-child { margin-top: -1px; }
.btext { display: flex; flex-direction: column; gap: 8px; margin: -1px 0 0 22.500px; align-items: flex-start; }
.q { font-weight: 450; color: #1f1f1f; }
.s { color: #75787b; }
.link { margin: -6px 32px 0 auto; color: #4a80f5; font-weight: 450; }
.no { margin-top: -6px; color: #66696c; font-weight: 450; }
.bk { margin: -3px 0 0 34px; color: #757575; width: 18px; }

.tabs { width: 1551px; height: 64px; box-sizing: border-box; border-bottom: 1px solid #e9ebee; margin-top: 15px; padding-left: 9px; display: flex; flex: none; }
.mt { width: 285px; height: 63px; display: flex; align-items: center; padding-left: 10px; box-sizing: border-box; color: #5f6368; font-weight: 450; }
.mt > svg { margin-right: 19.500px; }
.mt > .t, .pl { color: #4b4e52; }
.mt.cur { width: 264px; height: 64px; margin-right: 21px; padding: 0 0 0 12px; border-top: 4px solid transparent; border-bottom: 4px solid #1a5bd6; color: #1a5bd6; border-image: linear-gradient(transparent 50%, #1a5bd6 50%) 4 0; }
.mt.cur > svg { margin-right: 21px; }
.mt.cur > .t { color: #1a5bd6; }
.promo { display: flex; flex-direction: column; gap: 5px; align-items: flex-start; padding-top: 4px; }
.pl { display: flex; align-items: center; gap: 9.500px; }
.sub { font-size: 13px; font-weight: 400; color: #8c8f92; }
.chip { height: 18px; border-radius: 9px; color: #fff; font-size: 13.500px; font-weight: 600; display: flex; align-items: center; justify-content: center; flex: none; }
.green { width: 55px; background: #34832f; }
.blue { width: 41px; background: #2b78ee; font-size: 13px; }

.mail { width: 1551px; height: 45px; box-sizing: border-box; border-bottom: 1px solid #e9ebee; display: flex; align-items: center; padding: 0 18px 0 21px; flex: none; }
.st { margin: 1px 12.500px 0 15px; color: #c3c4c6; }
.from { width: 139.500px; font-weight: 600; display: flex; }
.subj { margin-left: 44.500px; font-weight: 600; }
.snip { margin-left: 5px; color: #66696d; }
.date { margin-left: auto; font-size: 13px; font-weight: 600; }

.foot { margin: 229px 0 0 18px; display: flex; align-items: flex-start; color: #5f6368; font-size: 12.500px; }
.foot > .t { margin-top: -5.500px; margin-left: 406px; }
.store { width: 248px; }
.meter { height: 7px; border-radius: 4px; background: #dadce0; overflow: hidden; }
.meter i { display: block; width: 50px; height: 7px; border-radius: 4px; background: #5f6368; }
.used { margin-top: 10px; display: flex; align-items: center; gap: 10.500px; white-space: nowrap; }
.used .t { margin-top: 1px; }
.used i { width: 1px; height: 14px; background: #c3c5c8; margin-left: -8px; }

.panel { flex: 1; display: flex; flex-direction: column; align-items: center; padding: 21px 0 0 0; gap: 40px; }
.panel svg:nth-child(3) { margin-top: 2px; }
.panel svg:nth-child(4) { margin-top: 4px; }
.cal { font: 700 9.500px Inter, sans-serif; fill: #9dc0f8; }

.status { position: absolute; left: 0; bottom: 0; width: 639px; height: 28px; box-sizing: border-box; border-top: 1px solid #ddd5dc; border-right: 1px solid #ddd5dc; border-radius: 0 5px 0 0; background: #f6d5e4; padding: 0 0 3px 6px; display: flex; align-items: center; font: 15px "Open Sans", sans-serif; color: #2b2b33; }

.task { height: 60px; flex: none; box-sizing: border-box; display: flex; align-items: center; background: linear-gradient(90deg, #2b3c36 0, #2e3d34 500px, #303b34 850px, #2f3a35 1150px, #333f38 1430px, #3c4e43 1550px, #48594d 1640px, #36453c 1720px, #34413a 1800px, #3a3a36 1900px); color: #fff; font: 15px "Open Sans", sans-serif; }
.weather { width: 450px; padding-left: 25px; box-sizing: border-box; display: flex; align-items: center; gap: 8px; flex: none; }
.weather > svg { margin-top: -3px; }
.weather div, .lang, .clk { display: flex; flex-direction: column; margin-top: -2px; }
.weather .t, .lang .t, .clk .t { line-height: 20px; align-self: flex-start; }
.dim { color: #c8cecb; }
.win { margin-left: 25px; }
.tsearch { width: 273px; height: 38px; margin-left: 18px; box-sizing: border-box; border-radius: 19px; background: #f3f5f4; padding: 0 6px 0 14px; display: flex; align-items: center; flex: none; font-size: 17px; color: #55585a; }
.tsearch .t { margin-left: 12px; }
.art { margin-left: auto; margin-top: 1px; }
.apps { display: flex; margin-left: 3px; flex: none; }
.app { position: relative; width: 55px; height: 50px; display: flex; align-items: center; justify-content: center; }
.run::after { content: ""; position: absolute; bottom: 1px; left: 23.500px; width: 8px; height: 4px; border-radius: 2px; background: #a3a8a5; }
.act { background: #ffffff12; border-radius: 5px; width: 48px; box-shadow: inset 0 0 0 1px #ffffff14; margin: 0 3.500px; }
.act::after { left: 14px; width: 20px; background: #9dc2bb; }
.screen .bd { position: absolute; right: 7px; top: 4px; width: 20px; height: 20px; border-radius: 50%; text-align: center; font: 14px/20px "Open Sans", sans-serif; }
.b3 { background: #8fb9b0; color: #111; }
.screen .red { background: #ee524f; width: 18px; height: 18px; line-height: 17px; right: 7px; top: 5px; font-size: 13.500px; }
.screen .fifty { background: #e8453c; right: 6px; top: 7px; font-size: 12.500px; }
.screen .pink { background: #e8357b; font: 600 9px/20px Inter, sans-serif; right: 2px; }
.tray { display: flex; align-items: center; margin-left: 97.500px; flex: none; }
.mic { margin-left: 26px; }
.lang { width: 60px; margin-left: 11px; }
.lang .t { align-self: center; }
.net { margin-left: 7px; }
.vol { margin-left: 9px; }
.bat { margin: -2px 0 0 9px; }
.clk { width: 98px; margin-right: 11px; }
.clk .t { align-self: flex-end; }
</style>
